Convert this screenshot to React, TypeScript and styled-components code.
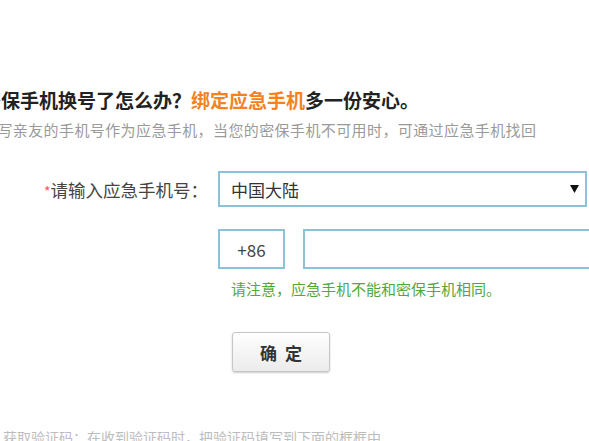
import styled, { createGlobalStyle } from "styled-components"

const GlobalStyle = createGlobalStyle`
    html, body {
        margin: 0;
        padding: 0;
        background: #fff;
        overflow: hidden;
    }
    body {
        font-family: "Noto Sans CJK SC", "Liberation Sans", sans-serif;
    }
`

const Page = styled.div`
    width: 589px;
    height: 441px;
    overflow: hidden;
    padding-top: 88px;
    box-sizing: border-box;
`

const Title = styled.h2`
    margin: 0 0 0 -18px;
    font-size: 19px;
    line-height: 24px;
    font-weight: 700;
    color: #222;
    white-space: nowrap;
`

const Highlight = styled.span`
    color: #f5821f;
`

const Intro = styled.p`
    margin: 6px 0 0 -18px;
    font-size: 15px;
    letter-spacing: 0.4px;
    line-height: 24px;
    color: #9a9a9a;
    white-space: nowrap;
`

const Form = styled.div`
    margin-top: 29px;
    display: grid;
    grid-template-columns: 218px 1fr;
    align-items: center;
`

const Label = styled.label`
    justify-self: end;
    padding-right: 10px;
    font-size: 17.5px;
    color: #444;
    white-space: nowrap;
`

const Star = styled.span`
    color: #f25555;
    font-size: 14px;
`

const Field = styled.div<{ $top?: number }>`
    grid-column: 2;
    margin-top: ${(p) => p.$top ?? 0}px;
    display: flex;
    gap: 18px;
`

const Select = styled.div`
    width: 369px;
    height: 36px;
    box-sizing: border-box;
    border: 2px solid #8cc2d9;
    display: flex;
    align-items: center;
    justify-content: space-between;
    padding: 0 6px 0 11px;
    font-size: 17px;
    color: #333;
`

const Box = styled.div<{ $w: number }>`
    width: ${(p) => p.$w}px;
    flex-shrink: 0;
    height: 40px;
    box-sizing: border-box;
    border: 2px solid #8cc2d9;
    display: flex;
    align-items: center;
    justify-content: center;
    font-size: 17px;
    color: #444;
`

const Notice = styled.div`
    grid-column: 2;
    margin: 10px 0 0 13px;
    font-size: 15px;
    line-height: 20px;
    color: #52a838;
    white-space: nowrap;
`

const Button = styled.button`
    grid-column: 2;
    justify-self: start;
    margin: 33px 0 0 14px;
    width: 98px;
    height: 40px;
    border: 1px solid #c6c6c6;
    border-radius: 3px;
    background: linear-gradient(#ffffff, #ebebeb);
    box-shadow: 0 1px 2px rgba(0, 0, 0, 0.2);
    font-family: "Noto Sans CJK SC", sans-serif;
    font-size: 17px;
    font-weight: 700;
    color: #333;
    letter-spacing: 8px;
    padding: 0 0 0 8px;
`

const Footer = styled.p`
    margin: 55px 0 0 3px;
    font-size: 14px;
    line-height: 20px;
    color: #bdbdbd;
    white-space: nowrap;
`

const Caret = () => (
    <svg width="9" height="8" viewBox="0 0 9 8">
        <path d="M0 0 H9 L4.5 8 Z" fill="#111" />
    </svg>
)

const App = () => {
    return (
        <>
            <GlobalStyle />
            <Page>
                <Title>
                    密保手机换号了怎么办？<Highlight>绑定应急手机</Highlight>多一份安心。
                </Title>
                <Intro>填写亲友的手机号作为应急手机，当您的密保手机不可用时，可通过应急手机找回</Intro>

                <Form>
                    <Label>
                        <Star>*</Star>请输入应急手机号：
                    </Label>
                    <Field>
                        <Select>
                            中国大陆
                            <Caret />
                        </Select>
                    </Field>

                    <Field $top={22}>
                        <Box $w={67}>+86</Box>
                        <Box $w={300} />
                    </Field>

                    <Notice>请注意，应急手机不能和密保手机相同。</Notice>

                    <Button>确定</Button>
                </Form>

                <Footer>获取验证码：在收到验证码时，把验证码填写到下面的框框中</Footer>
            </Page>
        </>
    )
}

export default App
